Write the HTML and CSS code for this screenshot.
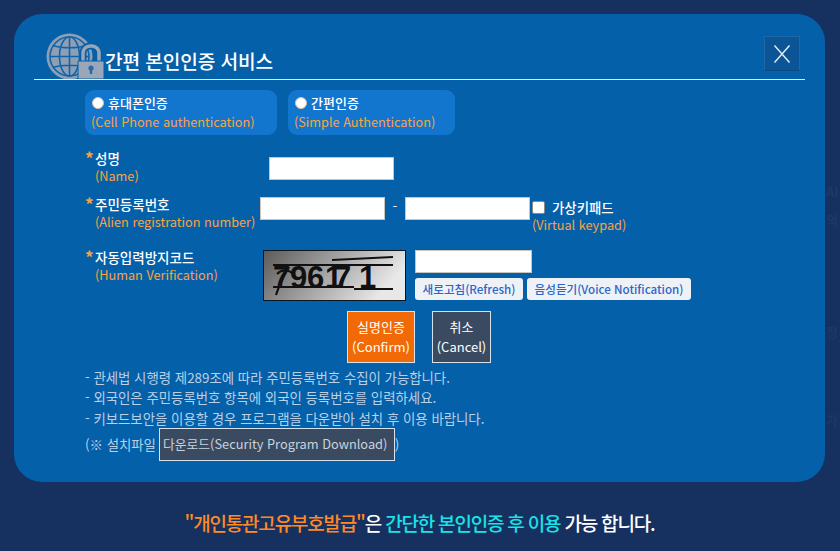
FILE: index.html
```html
<!DOCTYPE html>
<html lang="ko">
<head>
<meta charset="utf-8">
<title>간편 본인인증 서비스</title>
<link rel="stylesheet" href="styles.css">
</head>
<body>
<div class="ghost g1">AI</div>
<div class="ghost g1b">의</div>
<div class="ghost g2">정</div>
<div class="ghost g3">가</div>
<main class="panel">
  <header class="head">
    <svg class="logo" width="60" height="46" viewBox="0 0 60 46" aria-hidden="true">
      <circle cx="24.500" cy="23.500" r="23" fill="#8f9fb3"/>
      <g fill="none" stroke="#0f64ab" stroke-width="1.600">
        <circle cx="24.500" cy="23.500" r="19.500"/>
        <ellipse cx="24.500" cy="23.500" rx="10" ry="19.500"/>
        <path d="M24.500 4V43M8 12.500C17 15.500 32 15.500 41 12.500M5 23.500H44M8 34.500C17 31.500 32 31.500 41 34.500"/>
      </g>
      <path d="M38 30V20a7 7 0 0 1 7-7h2a7 7 0 0 1 7 7v10" fill="none" stroke="#0560aa" stroke-width="7"/>
      <path d="M38 30V20a7 7 0 0 1 7-7h2a7 7 0 0 1 7 7v10" fill="none" stroke="#96a5b8" stroke-width="3.500"/>
      <rect x="33" y="28" width="26" height="18" rx="1" fill="#99a7b9" stroke="#0560aa"/>
      <circle cx="46" cy="35" r="2.600" fill="#2a6aa8"/>
      <rect x="44.800" y="35" width="2.400" height="6" fill="#2a6aa8"/>
    </svg>
    <h1 class="title">간편 본인인증 서비스</h1>
    <button class="close" type="button" aria-label="닫기">
      <svg width="20" height="20" viewBox="0 0 20 20"><path d="M2.500 1.500L17.500 18.500M17.500 1.500L2.500 18.500" stroke="#e6eef6" stroke-width="1.400" fill="none"/></svg>
    </button>
  </header>

  <div class="tabs">
    <label class="tab tab-phone">
      <span class="tab-top"><span class="radio"></span>휴대폰인증</span>
      <span class="en">(Cell Phone authentication)</span>
    </label>
    <label class="tab tab-simple">
      <span class="tab-top"><span class="radio"></span>간편인증</span>
      <span class="en">(Simple Authentication)</span>
    </label>
  </div>

  <section class="form">
    <div class="row row-name">
      <div class="label"><span class="ko"><i class="star">*</i>성명</span><span class="en">(Name)</span></div>
      <span class="input name-input"></span>
    </div>
    <div class="row row-id">
      <div class="label"><span class="ko"><i class="star">*</i>주민등록번호</span><span class="en">(Alien registration number)</span></div>
      <span class="input"></span>
      <span class="dash">-</span>
      <span class="input"></span>
      <div class="keypad">
        <span class="keypad-top"><span class="check"></span>가상키패드</span>
        <span class="en">(Virtual keypad)</span>
      </div>
    </div>
    <div class="row row-captcha">
      <div class="label"><span class="ko"><i class="star">*</i>자동입력방지코드</span><span class="en">(Human Verification)</span></div>
      <svg class="captcha" width="143" height="51" viewBox="0 0 143 51" role="img" aria-label="796171">
        <defs><linearGradient id="cg" x1="0" x2="1" y1="0" y2="0.300"><stop offset="0" stop-color="#5a5a5a"/><stop offset="1" stop-color="#e8e8e8"/></linearGradient></defs>
        <rect x="0.500" y="0.500" width="142" height="50" fill="url(#cg)" stroke="#0c1420"/>
        <text class="code" x="10 27 44 62 71 96" y="38">796171</text>
        <path d="M69 10L130 7M10 15H130M91 39H130M10 37H91M26 17C20 26 16 36 13 45M14 24C20 18 30 20 32 28" stroke="#111" stroke-width="2.200" fill="none"/>
      </svg>
      <div class="cap-side">
        <span class="input cap-input"></span>
        <div class="cap-btns">
          <button class="pill pill-a" type="button">새로고침(Refresh)</button>
          <button class="pill pill-b" type="button">음성듣기(Voice Notification)</button>
        </div>
      </div>
    </div>
    <div class="actions">
      <button class="act confirm" type="button">실명인증<br>(Confirm)</button>
      <button class="act cancel" type="button">취소<br>(Cancel)</button>
    </div>
    <ul class="notes">
      <li>- 관세법 시행령 제289조에 따라 주민등록번호 수집이 가능합니다.</li>
      <li>- 외국인은 주민등록번호 항목에 외국인 등록번호를 입력하세요.</li>
      <li>- 키보드보안을 이용할 경우 프로그램을 다운받아 설치 후 이용 바랍니다.</li>
    </ul>
    <p class="download">(※ 설치파일 <button class="dl" type="button">다운로드(Security Program Download)</button>)</p>
  </section>
</main>
<p class="foot"><span class="or">"개인통관고유부호발급"</span>은 <span class="cy">간단한 본인인증 후 이용</span> 가능 합니다.</p>
</body>
</html>
```

FILE: styles.css
```css
* { box-sizing: border-box; }
html, body { margin: 0; height: 100%; }
body {
  position: relative;
  width: 840px;
  height: 551px;
  overflow: hidden;
  padding: 14px 15px 0 14px;
  background: #163060;
  color: #fff;
  font-family: "Noto Sans CJK KR", "Noto Sans", sans-serif;
}
.ghost {
  position: absolute;
  left: 826px;
  color: #1c3969;
  font-size: 13px;
  line-height: 16px;
  font-weight: 700;
}
.g1 { top: 184px; }
.g1b { top: 212px; }
.g2 { top: 324px; }
.g3 { top: 412px; }

.panel {
  position: relative;
  height: 468px;
  border-radius: 28px;
  background: #0560aa;
}
.head {
  display: flex;
  align-items: flex-end;
  height: 66px;
  margin: 0 20px;
  border-bottom: 1.500px solid #dcebf7;
  padding-left: 11px;
}
.logo { display: block; flex: none; }
.title {
  margin: 0 0 5px;
  font-size: 19.200px;
  line-height: 26px;
  font-weight: 500;
  letter-spacing: -0.150px;
}
.close {
  display: flex;
  align-items: center;
  justify-content: center;
  width: 36px;
  height: 35px;
  margin: 0 5px 8px auto;
  padding: 0;
  background: #0b5596;
  border: 1px solid #1c67a8;
  border-bottom-color: #0a4a82;
}

.tabs {
  display: flex;
  gap: 11px;
  margin: 10px 0 0 71px;
}
.tab {
  display: flex;
  flex-direction: column;
  height: 45px;
  padding: 4px 6px 0;
  border-radius: 9px;
  background: #1276cf;
}
.tab-phone { width: 192px; }
.tab-simple { width: 167px; }
.tab-top {
  display: flex;
  align-items: center;
  font-size: 13px;
  line-height: 18.500px;
  font-weight: 500;
}
.radio {
  width: 12px;
  height: 12px;
  margin: 0 4px 0 1px;
  border-radius: 50%;
  background: #fff;
  border: 1px solid #d5c4ae;
}
.en {
  display: block;
  color: #f9a243;
  font-size: 12.700px;
  line-height: 18px;
  white-space: nowrap;
}

.form { margin: 0 0 0 71px; }
.row { display: flex; }
.label {
  flex: none;
  width: 175px;
  padding-left: 10px;
}
.ko {
  position: relative;
  display: block;
  font-size: 13.500px;
  line-height: 18px;
  font-weight: 500;
  white-space: nowrap;
}
.star {
  position: absolute;
  left: -10px;
  top: 0;
  color: #f9a243;
  font-size: 17px;
  font-style: normal;
  font-weight: 700;
}
.input {
  display: block;
  flex: none;
  width: 125px;
  height: 23px;
  background: #fff;
  border: 1px solid #c9c5bc;
}
.row-name { height: 40px; margin-top: 14px; }
.name-input { margin: 8px 0 0 9px; }
.row-id { height: 56px; margin-top: 5px; }
.row-id .label { padding-top: 1px; }
.row-id .input { margin-top: 3px; }
.dash {
  width: 20px;
  margin-top: 2px;
  text-align: center;
  color: #dce8f3;
  font-size: 14px;
  line-height: 20px;
}
.keypad { margin: 4px 0 0 2px; }
.keypad-top {
  display: flex;
  align-items: center;
  font-size: 13.400px;
  line-height: 18px;
  font-weight: 500;
}
.check {
  width: 13px;
  height: 13px;
  margin-right: 7px;
  background: #fff;
  border: 1px solid #8a8a8a;
  border-radius: 2px;
}
.row-captcha { height: 51px; }
.row-captcha .label { margin-top: -2px; }
.captcha { display: block; flex: none; margin-left: 3px; }
.cap-side { margin-left: 9px; }
.cap-input { width: 117px; }
.cap-btns { display: flex; gap: 4px; margin-top: 5px; }
.pill {
  height: 22px;
  padding: 0;
  border: 0;
  border-radius: 3px;
  background: #eef2f7;
  color: #2b66c8;
  font-family: inherit;
  font-size: 11.600px;
  font-weight: 500;
  white-space: nowrap;
}
.pill-a { width: 108px; }
.pill-b { width: 164px; }

.actions {
  display: flex;
  gap: 17px;
  margin: 10px 0 0 262px;
}
.act {
  height: 52px;
  padding: 0 0 1px;
  border: 1px solid #d6e2ee;
  color: #fff;
  font-family: inherit;
  font-size: 13px;
  line-height: 19.500px;
}
.confirm { width: 68px; background: #f26a05; }
.cancel { width: 59px; background: #3a4a60; }

.notes {
  margin: 3.500px 0 0;
  padding: 0;
  list-style: none;
  color: #b9d0e6;
  font-size: 13.400px;
  line-height: 20.500px;
}
.download {
  display: flex;
  align-items: center;
  margin: -0.500px 0 0;
  color: #b9d0e6;
  font-size: 13.400px;
  height: 33px;
  white-space: pre;
}
.dl {
  flex: none;
  width: 236px;
  height: 33px;
  margin-left: -1px;
  padding: 0 3px 2px 0;
  background: #3a4a60;
  border: 1px solid #d6e2ee;
  color: #c9d3de;
  font-family: inherit;
  font-size: 12.800px;
}
.code {
  font-family: "Liberation Sans", sans-serif;
  font-size: 31px;
  font-weight: 700;
  fill: #111;
}
.foot {
  margin: 28px 0 0;
  text-align: center;
  font-size: 19px;
  line-height: 26px;
  font-weight: 500;
  letter-spacing: -1.200px;
}
.or { color: #ff8a24; }
.cy { color: #19e3e8; }
```
